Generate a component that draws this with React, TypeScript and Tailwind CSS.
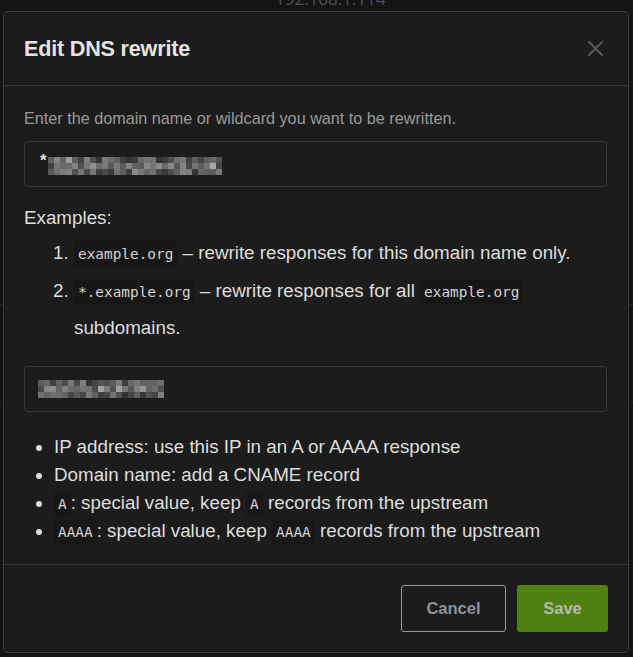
import type { ReactNode } from 'react'

// pixelated redaction block, like the one in the screenshot
function Mosaic({ cols, rows, seed, cell = 6 }: { cols: number; rows: number; seed: number; cell?: number }) {
  let s = seed
  const next = () => {
    s = (s * 1103515245 + 12345) & 0x7fffffff
    return s / 0x7fffffff
  }
  const cells: { x: number; y: number; c: string }[] = []
  for (let r = 0; r < rows; r++) {
    for (let c = 0; c < cols; c++) {
      const edge = r === 0 || r === rows - 1 || c === 0 || c === cols - 1
      let v = 70 + Math.floor(next() * 80)
      if (edge) v -= 22
      if (next() > 0.9) v += 40
      const h = Math.max(40, Math.min(190, v)).toString(16).padStart(2, '0')
      cells.push({ x: c * cell, y: r * cell, c: `#${h}${h}${h}` })
    }
  }
  return (
    <svg width={cols * cell} height={rows * cell} className="inline-block align-middle">
      {cells.map((k, i) => (
        <rect key={i} x={k.x} y={k.y} width={cell} height={cell} fill={k.c} />
      ))}
    </svg>
  )
}

function Code({ children }: { children: ReactNode }) {
  return (
    <code className="rounded-[3px] bg-[#171717] px-[4px] py-[5px] font-['DejaVu_Sans_Mono',monospace] text-[14.4px] leading-none text-[#d4d4d4]">
      {children}
    </code>
  )
}

export default function App() {
  return (
    <div className="relative h-[657px] w-full overflow-hidden bg-[#141414] font-['Liberation_Sans',Arial,sans-serif]">
      {/* page behind the dialog */}
      <div className="h-[305px] border-b border-[#232323]">
        <div className="flex h-[7px] items-end pl-[275px]">
          <span className="font-['Open_Sans',sans-serif] text-[17px] leading-[17px] text-[#4a535b]">192.168.1.114</span>
        </div>
      </div>
      <div className="h-[98px] border-b border-[#232323]" />

      {/* dialog */}
      <div className="absolute inset-0 pl-[3px] pt-[11px]">
        <div className="flex h-[642px] w-[626px] flex-col overflow-hidden rounded-[4px] border border-[#383838] bg-[#1c1c1c]">
          <div className="flex h-[74px] shrink-0 items-center justify-between border-b border-[#383838] pl-5 pr-[25px]">
            <h2 className="text-[21.6px] font-bold leading-none tracking-[-0.2px] text-[#e4e4e4]">Edit DNS rewrite</h2>
            <svg width="15" height="15" viewBox="0 0 15 15" aria-label="Close">
              <path d="M1 1 L14 14 M14 1 L1 14" stroke="#5c5c5c" strokeWidth="1.8" strokeLinecap="square" />
            </svg>
          </div>

          <div className="min-h-0 flex-1 px-5 pt-5 text-[#dedede]">
            <p className="text-[16.2px] leading-[24px] text-[#9a9a9a]">
              Enter the domain name or wildcard you want to be rewritten.
            </p>
            <div className="mr-px mt-[11px] flex h-[46px] items-center rounded-[4px] border border-[#3a3a3a] pl-[15px]">
              <span className="mt-[-6px] text-[17px] font-bold text-[#e0e0e0]">*</span>
              <span className="ml-[1px] mt-[3px]">
                <Mosaic cols={29} rows={3} seed={7} />
              </span>
            </div>

            <div className="mt-[17px] text-[18.8px] leading-[27.6px]">Examples:</div>
            <ol className="mt-[3px] list-decimal pl-[50px] text-[18.8px] leading-[36.8px]">
              <li>
                <Code>example.org</Code> – rewrite responses for this domain name only.
              </li>
              <li className="mt-[2px]">
                <Code>*.example.org</Code> – rewrite responses for all <Code>example.org</Code> subdomains.
              </li>
            </ol>

            <div className="mr-px mt-[19px] flex h-[46px] items-center rounded-[4px] border border-[#3a3a3a] pl-[13px]">
              <Mosaic cols={21} rows={3} seed={41} />
            </div>

            <ul className="mt-[21px] list-disc pl-[30px] text-[18.8px] leading-[28px]">
              <li>IP address: use this IP in an A or AAAA response</li>
              <li>Domain name: add a CNAME record</li>
              <li>
                <Code>A</Code>: special value, keep <Code>A</Code> records from the upstream
              </li>
              <li>
                <Code>AAAA</Code>: special value, keep <Code>AAAA</Code> records from the upstream
              </li>
            </ul>
          </div>

          <div className="flex shrink-0 justify-end gap-[11px] border-t border-[#383838] px-5 pb-[20px] pt-[20px]">
            <button className="h-[47px] w-[105px] rounded-[3px] border border-[#9a9a9a] text-[16.5px] font-bold text-[#8e9398]">
              Cancel
            </button>
            <button className="h-[47px] w-[91px] rounded-[3px] bg-[#4f8012] text-[16.5px] font-bold text-[#b4bcab]">
              Save
            </button>
          </div>
        </div>
      </div>
    </div>
  )
}
